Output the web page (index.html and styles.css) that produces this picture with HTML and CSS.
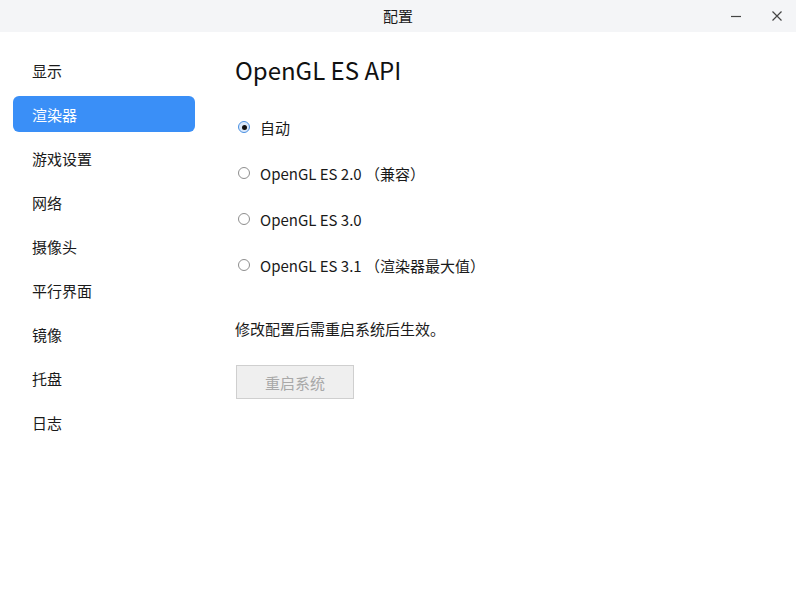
FILE: index.html
```html
<!DOCTYPE html>
<html lang="zh">
<head>
<meta charset="utf-8">
<title>配置</title>
<link rel="stylesheet" href="styles.css">
</head>
<body>
<div class="window">
  <header class="titlebar">
    <div class="title">配置</div>
    <div class="controls">
      <span class="ctl">
        <svg width="12" height="12" viewBox="0 0 12 12"><path d="M1 6.5h10" stroke="#444" stroke-width="1.2"/></svg>
      </span>
      <span class="ctl">
        <svg width="12" height="12" viewBox="0 0 12 12"><path d="M1.5 1.5l9 9M10.5 1.5l-9 9" stroke="#444" stroke-width="1.2"/></svg>
      </span>
    </div>
  </header>
  <div class="body">
    <nav class="sidebar">
      <div class="nav-item">显示</div>
      <div class="nav-item active">渲染器</div>
      <div class="nav-item">游戏设置</div>
      <div class="nav-item">网络</div>
      <div class="nav-item">摄像头</div>
      <div class="nav-item">平行界面</div>
      <div class="nav-item">镜像</div>
      <div class="nav-item">托盘</div>
      <div class="nav-item">日志</div>
    </nav>
    <main class="content">
      <h1 class="heading">OpenGL ES API</h1>
      <div class="radios">
        <label class="radio-row"><span class="radio checked"></span><span>自动</span></label>
        <label class="radio-row"><span class="radio"></span><span>OpenGL ES 2.0 （兼容）</span></label>
        <label class="radio-row"><span class="radio"></span><span>OpenGL ES 3.0</span></label>
        <label class="radio-row"><span class="radio"></span><span>OpenGL ES 3.1 （渲染器最大值）</span></label>
      </div>
      <p class="note">修改配置后需重启系统后生效。</p>
      <button class="btn" disabled>重启系统</button>
    </main>
  </div>
</div>
</body>
</html>
```

FILE: styles.css
```css
* { box-sizing: border-box; }
html, body { margin: 0; padding: 0; }
body {
  width: 796px;
  height: 612px;
  background: #ffffff;
  font-family: "Noto Sans CJK SC", "Noto Sans", sans-serif;
  color: #1a1a1a;
  font-size: 15px;
  overflow: hidden;
}
.window { display: flex; flex-direction: column; height: 612px; }
.titlebar {
  height: 32px;
  background: #f4f5f7;
  display: flex;
  align-items: center;
  justify-content: center;
  position: relative;
}
.title { font-size: 15px; line-height: 20px; color: #1a1a1a; }
.controls {
  position: absolute;
  right: 0;
  top: 0;
  height: 32px;
  display: flex;
  align-items: center;
  gap: 29px;
  padding-right: 13px;
}
.ctl { width: 12px; height: 12px; display: flex; }
.body { display: flex; flex: 1; }
.sidebar {
  width: 208px;
  padding: 20px 13px 0 13px;
  display: flex;
  flex-direction: column;
  gap: 8px;
}
.nav-item {
  height: 36px;
  line-height: 35px;
  padding-top: 1px;
  padding-left: 19px;
  border-radius: 6px;
  font-size: 15px;
  color: #1a1a1a;
}
.nav-item.active { background: #3a8ff7; color: #ffffff; }
.content { padding: 22px 0 0 27px; flex: 1; }
.heading {
  margin: 0;
  font-size: 24px;
  font-weight: 400;
  line-height: 32px;
  color: #111;
}
.radios { margin-top: 18px; display: flex; flex-direction: column; }
.radio-row {
  height: 46px;
  display: flex;
  align-items: center;
  gap: 10px;
  padding-left: 3px;
  font-size: 15px;
  color: #1a1a1a;
}
.radio {
  width: 12px;
  height: 12px;
  border-radius: 50%;
  border: 1px solid #8e8e8e;
  background: #fff;
  display: flex;
  align-items: center;
  justify-content: center;
}
.radio.checked { border-color: #4a90e2; background: #dbe9fb; }
.radio.checked::after {
  content: "";
  width: 5px;
  height: 5px;
  border-radius: 50%;
  background: #111;
}
.note { margin: 31px 0 0 0; line-height: 20px; font-size: 15px; color: #1a1a1a; }
.btn {
  margin-top: 26px;
  margin-left: 1px;
  width: 118px;
  height: 34px;
  background: #efefef;
  border: 1px solid #cfcfcf;
  border-radius: 0;
  color: #a8a8a8;
  font-family: "Noto Sans CJK SC", "Noto Sans", sans-serif;
  font-size: 15px;
  padding: 0;
}
```
